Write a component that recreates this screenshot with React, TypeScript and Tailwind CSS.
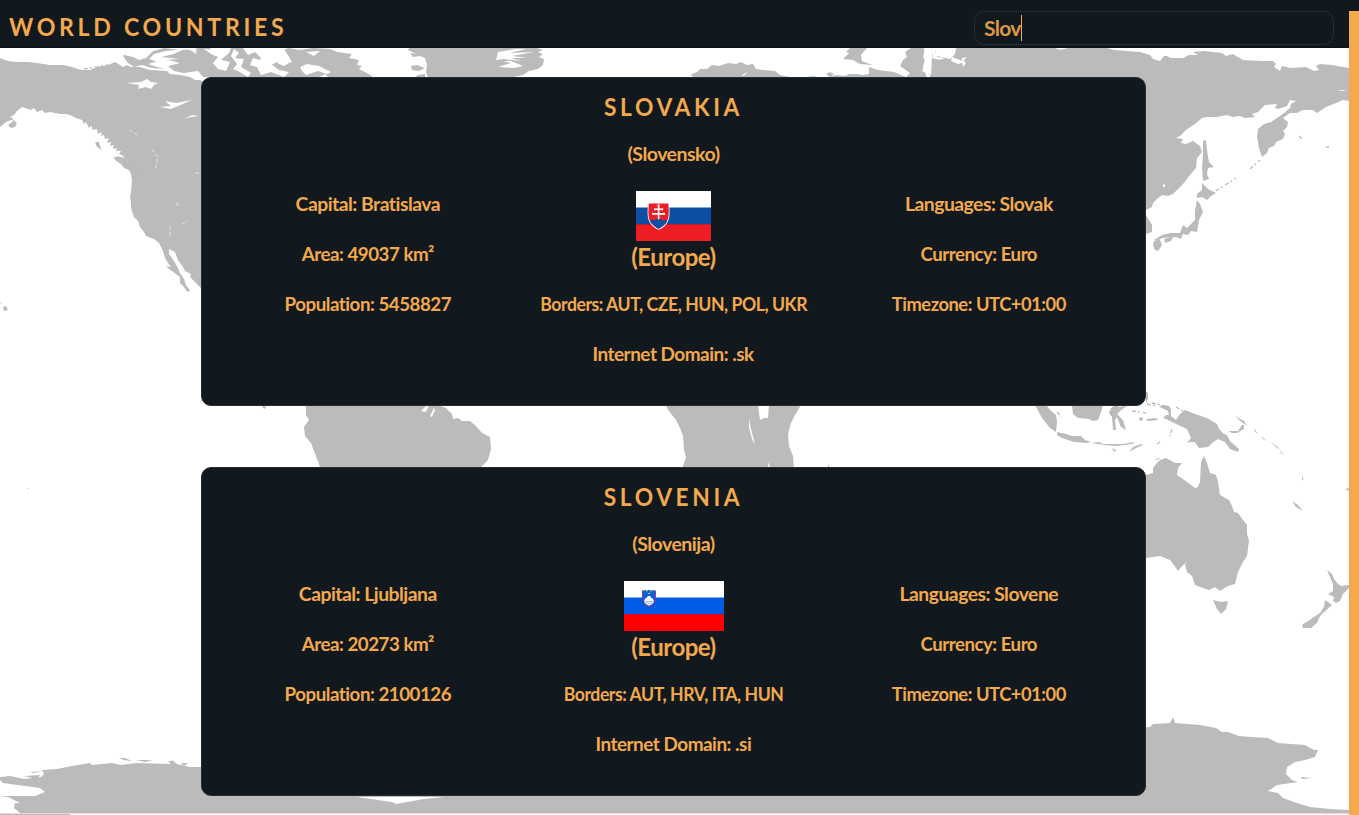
import React from "react";

type Country = {
  name: string;
  nativeName: string;
  flag: React.ReactNode;
  continent: string;
  left: string[];
  right: string[];
  borders: string;
  domain: string;
};

const SlovakFlag = () => (
  <svg width="75" height="50" viewBox="0 0 75 50" className="block">
    <path fill="#fff" d="M0 0h75v17H0z" />
    <path fill="#0b4ea2" d="M0 16.6h75v17H0z" />
    <path fill="#ee1c25" d="M0 33.3h75V50H0z" />
    <path fill="#fff" d="M12 11.7h21.2c.6 10 .8 15-1.5 19.2-2 4-6 6.500-9.100 7.900-3-1.400-7-3.900-9.100-7.900-2.300-4.200-2.100-9.200-1.500-19.200z" />
    <path fill="#ee1c25" d="M12.800 12.500h19.600c.6 9 .7 14-1.300 17.800-1.800 3.600-5.500 6.100-8.500 7.500-3-1.400-6.700-3.900-8.500-7.500-2-3.800-1.900-8.800-1.300-17.800z" />
    <path fill="#0b4ea2" d="M14.200 30.300c1-1.600 3-1.800 4.200-.9 1-2.200 6.500-2.400 8.400 0 1.600-.8 3.200-.4 4.200.9-1.800 3.600-5.400 6-8.400 7.500-3-1.500-6.600-3.900-8.400-7.500z" />
    <path fill="none" stroke="#fff" strokeWidth="1.6" d="M22.600 13.800v14.400M18.500 18.200h8.200M17 22.900h11.200M17 21.800v2.200M28.200 21.800v2.200M18.800 17.200v2M26.400 17.200v2M21.500 14.200h2.200" />
  </svg>
);

const SlovenianFlag = () => (
  <svg width="100" height="50" viewBox="0 0 100 50" className="ml-px block">
    <path fill="#fff" d="M0 0h100v17H0z" />
    <path fill="#005ce5" d="M0 16.600h100v17H0z" />
    <path fill="#f00" d="M0 33.300h100V50H0z" />
    <path fill="#005ce5" stroke="#a5285c" strokeWidth=".9" d="M18.500 9.800c0 7-.3 11.200 2.500 13.500 1.500 1.200 2.700 1.500 4 2.200 1.300-.7 2.500-1 4-2.200 2.800-2.300 2.500-6.500 2.500-13.500" />
    <path fill="#1560d0" d="M18.500 9.800c2-1 11-1 13 0v3h-13z" />
    <path fill="#fff" d="M20 20.500l1-3 1.500-.6.900-1.300 1.600-.8 1.600.8.9 1.300 1.500.6 1 3c-1 2.700-3 3.300-5 4.200-2-.9-4-1.500-5-4.200z" />
    <path stroke="#86afe9" strokeWidth=".9" d="M20.600 20.600h8.800M21 22.200h8" />
    <path fill="#ffe14a" d="M22 9.200h1.700v1H22zM26.300 9.200H28v1h-1.700zM24.200 12h1.700v1h-1.700z" />
  </svg>
);

const WorldMap = () => (
  <svg className="absolute inset-0 h-full w-full" viewBox="0 0 1349 815" preserveAspectRatio="none" aria-hidden="true">
    <g fill="#bbbbbb">
      {/* North America */}
      <path d="M0 58L5 60 8 61 17 62 28 62 37 63 50 65 63 65 72 67 78 69 83 70 90 70 97 67 108 65 115 62 120 65 123 67 127 65 131 67 140 67 150 70 167 71 170 74 180 75 190 77 195 80 199 80 210 83V296L201 288 196 283 190 277 191 274 185 271 183 267 178 260 175 252 171 250 169 249 169 254 172 258 177 266 180 273 184 279 186 285 189 289 190 291 188 292 186 290 184 287 180 283 180 277 176 274 169 269 166 266 171 267 168 263 165 258 163 251 159 243 154 239 146 236 144 232 140 227 138 221 134 217 131 208 131 203 130 197 131 192 132 180 131 174 129 170 124 168 121 164 115 160 114 157 120 157 125 158 122 155 119 154 121 151 116 151 117 148 113 149 114 145 110 146 111 142 107 143 109 138 105 139 104 135 101 136 102 132 98 134 97 129 93 130 92 125 89 128 86 122 84 124 82 120 76 118 70 115 66 114 60 114 50 112 45 113 42 110 37 112 34 108 31 110 22 107 17 111 14 115 10 117 14 119 6 122 0 127z" />
      <path d="M8 125l4-3 1-2 4 3-2 4-4 1zM95 142l4 0 1 4 2 4-5-3zM117 156l7 2 4 4 6 1 4 7-1 5-4-5-9-6-6-4zM103 128l4 9 2-3zM90 122l3 8 1-4z" />
      <path d="M0 302l2 1-1 1zM3 307l3-1 2 4-4 1zM28 488h1v1h-1z" />
      {/* Canadian Arctic islands */}
      <path d="M129 48L124 55 133 57 139 60 146 58 153 51 164 48 181 50 192 49 197 52 196 48 210 48 214 53 222 59 229 53 231 48 243 48 248 55 255 52 261 58 259 62 267 67 279 61 285 64 292 62 288 55 284 50 288 48 300 50 313 48 330 49 337 52 352 54 349 58 359 60 357 65 362 66 359 69 369 74 373 77H203L198 71 184 73 174 71 168 66 180 63 168 60 155 62 148 64 157 67 165 69 152 68 142 65 134 67 128 63 123 56z" />
      {/* Greenland */}
      <path d="M409 48H537L543 50 538 52 543 54 539 57 544 59 543 65 538 69 529 71 523 75 514 77 497 77H428L426 72 427 65 425 58 420 56 413 57 410 53 416 54 408 50z" />
      <path d="M411 66l6-1 8 3-6 3-7-1zM418 75l7-1v3h-10z" />
      {/* Europe */}
      <path d="M687 81L693 76 690 75 697 72 700 69 707 69 712 65 719 66 728 63 736 64 741 62 747 65 753 64 756 69 764 70 775 71 780 75 790 77 797 81zM820 81L827 77 836 75 845 76 849 74 858 74 862 75 869 74 869 67 878 70 894 72 906 77 910 73 900 66 903 60 907 57 905 52 911 48H925L923 57 926 62 922 71 931 75 932 71 944 76 941 83H820z" />
      {/* Northern Asia */}
      <path d="M932 55L936 51 937 56 950 59 955 54 956 48H1055L1060 50 1068 48H1107L1114 50 1140 52 1150 55 1153 59 1160 61 1164 56 1167 56 1171 58 1183 58 1189 55 1198 55 1193 52 1204 51 1222 53 1226 56 1233 54 1243 60 1262 61 1273 61 1276 64 1274 67 1280 71 1282 66 1290 68 1306 67 1314 71 1319 70 1316 66 1320 64 1332 65 1349 68V101L1343 100 1336 103 1326 107 1317 113 1313 110 1303 110 1297 113 1290 113 1283 118 1288 122 1287 127 1283 131 1285 134 1283 139 1276 142 1274 146 1269 148 1267 153 1262 157 1259 148 1257 137 1258 129 1264 124 1271 122 1277 118 1284 113 1290 108 1291 104 1296 101 1290 100 1287 106 1278 109 1275 108 1277 104 1265 105 1258 112 1252 114 1255 117 1245 118 1240 116 1233 117 1227 115 1217 117 1207 117 1202 118 1195 124 1186 130 1180 136 1176 138 1183 139 1181 143 1186 144 1193 141 1200 146 1202 152 1197 158 1196 168 1190 175 1183 184 1173 194 1168 196 1162 195 1157 199 1153 203 1152 207 1146 210H1120V100H930z" />
      <path d="M849 53l-3-1 4-4h17l-6 7 1 6 10 4-12-1-7-4-10-1zM826 74l4-2 4 2-4 3zM806 77l8-1 6 2-7 3z" />
      <path d="M1140 214l6 1 6 10 0 7-6 2zM1203 141l3-1 1 10 2 12 5 5-6 1-1 6 2 5-6 2-1-13 1-13zM1202 183l6 6 8 4-5 3-4 4-5-3-5 1 0-4 5-4zM1197 200l3 4 3 8-4 8-2 12-6-1-3 4-5-1-2 5-5-2-14 1-4 3-4-1 8-5 9-2 9 0 3-8 4 3 8-8 0-9zM1154 241l6-1 2 5-4 6-3-1-2-5zM1164 239l9-2-2 4-6 2z" />
      {/* South America */}
      <path d="M306 405h132l8 3 6 6 1 5 5-1 4 3 8 0 6 5 6 7 8 4 1 12-3 11-6 6-5 8-1 3H323l-4-13-8-21-6-7-1-9 5-7-3-5zM262 406h3l1 2-2 1z" />
      {/* Africa */}
      <path d="M666 405h92l2 15 4-2 4 0 1-13h32l-6 10-4 8-3 11 1 12 4 10 1 13H682l4-12-2-7-1-14-3-8-4-8-8-10zM805 472h1v3h-1zM828 464l2 4h-2z" />
      {/* South-east Asian islands */}
      <path d="M1035 405h11l5 6 5 4 1 7-1 10-6-4-8-10zM1072 405h31l-2 7-3 8-5 1-4-2-11-1-5-4zM1057 432l9 2 6 2 9 0 4 4 6 2-4 1-13-1-12-4-5-3zM1111 408l4-3 5 2 8-2-8 6-3 3 6 6 3 10-5-3-4-10-2 3 1 10-3 0-1-13-3-4zM1091 443l8-1 4 2 10 0 9 0 13-2-3 2-15 2-12-1zM1129 452l4-5 8-3 2 1-7 3zM1111 448l5 2-1 2zM1139 418l3-1 1 3-3 1zM1146 419l10-1 2 2-10 1zM1146 391l2 2 0 6-2 4zM1159 407l3-2 7 1 2 3 0 7 5 4 4-6 5-4 10 4 12 4 10 6 2 5 5 5 3 1 3 6 9 8-1 3-8-3-5-7-7-3-6 4-4 4-9 1-4-6-5 0-3 1 4-5-4-9-11-5-10-5-3-1 3-3 3 0-1-4-6-3zM1228 431l10 0 4-6 2 0 0 4-7 4-5 0zM1235 416l9 5 3 5-8-6zM1254 428l4 6-3-2zM1261 436l6 5-4-2zM1270 441l10 8-3-1zM1280 450l4 5-3-2zM1302 475l2 6-2-2zM1306 480l2 8zM1292 501l6 4 5 6-7-4zM1345 489l4-1v3z" />
      {/* Oceania */}
      <path d="M1140 479L1146 475 1153 473 1153 468 1156 464 1160 460 1166 458 1175 463 1182 463 1178 468 1177 475 1187 482 1195 488 1198 487 1200 482 1201 462 1204 456 1207 463 1210 473 1216 475 1218 482 1220 495 1229 500 1232 506 1234 512 1238 513 1243 520 1247 525 1247 534 1249 541 1247 556 1243 562 1238 572 1235 584 1228 586 1220 591 1215 587 1209 590 1203 588 1195 585 1192 576 1187 572 1185 565 1187 562 1182 566 1178 571 1174 565 1170 560 1160 556 1146 558zM1213 600l8 2 7-1-2 8-5 5-4-5zM1327 570l5 4 2 5 4 5 3 2 8-1v3l-6 6-3 7-4 2-3-2 1-4-6-3 5-3 0-7zM1325 600l3 2 4 3-8 7-4 4-3 7-6 5-8 0-1-3 9-6 9-6 4-6zM1155 459l6-1-4 2z" />
      {/* Antarctica */}
      <path d="M0 777L10 776 24 779 41 777 44 774 42 770 57 769 72 766 90 763 92 765 112 763 121 765 136 763 170 764 172 760 177 764 190 767 201 767H1140V728L1150 727 1153 724 1170 723 1173 717 1175 723 1200 725 1216 728 1222 732 1228 732 1239 736 1251 737 1268 738 1278 743 1305 745 1314 750 1318 750 1315 757 1305 760 1295 762 1287 767 1286 774 1292 780 1298 782 1277 785 1268 791 1278 793 1283 798 1297 803 1310 807 1330 809 1349 810V813H20L14 808 15 803 20 803 8 797 0 796 35 796 45 792 40 788 3 783 0 780z" />
      <path d="M119 758l6 0 7 3-8-1zM136 760l17 0-8 2zM168 761l5 0 3 4-5-1zM181 763l7 0-4 3zM30 772l12-1-8 2zM24 776l16-1-3 4zM1301 777l11 1-10 1z" />
      <path fill="#ddd" d="M0 813h1349v1H0z" />
      <path d="M0 814h70v1H0z" />
    </g>
    <g fill="#fff">
      <path d="M127 83l14-1 6-3 4 3 7 1-4 2-3 4-5-2-8 2 1-4zM160 107l11-1-6-5 11 2 16-3-14 6-7 3zM184 119l8-4 7 1-8 1zM176 202l3 4-2-1zM154 54l12-3 10-1 8-1-10 5-13 3 18 2-14 1 6 4-14-2-8-3zM187 49l7 0 3 6-5-4zM204 49l14 1 4 10 8 2-4 9-8-2-5-6 5-6-7-3zM234 49l5 4-4 5 9 1-3 8 10 6-3 4-10-6-5-2 4-5-6-8zM253 58l7 2 13-4-3 7 9 7 10 2-5 5-13-5-10 3-4-8-7-2zM284 49l3 5-4 6 6 3-5 3-7-3 4-6zM306 52l14-1-6 5zM300 67l7-3 12 2 12 6-4 2-9-3-12 4-4-4zM498 52l18-3 10 0-16 4 24-1-22 4 15 2-17 0 12 3-18-2-8 1zM498 67l13-4-8-2 8 0 12 5-9 2zM320 77l5-3 3 3z" />
      <path d="M924 48l4 0-1 11 3 8-1 7 3 7-4 0-2-6-3-8 2-8zM934 51l4 3-1 3 8 1-5 2-8-2zM952 57l14 5-8 2-7-3zM962 58l5-1-4 4 3 2-3 4zM1163 184l2 1 0 2-2 0zM1337 91l5-1 5 1-5 0zM742 75l5-3-1 2-3 2zM749 419l2 10 4 16-3-6-3-12zM768 462l2 5 0 14h-1zM357 797l35 5 4 2 28-5 20-2zM421 411l6-6 2 0-3 7zM430 416l4-8 1 2-3 7z" />
    </g>
    <path fill="none" stroke="#bbb" strokeWidth="1.3" strokeDasharray="4 2 2 3" d="M1250 169l10-9M1216 191l20-13M1152 403l14 3M1132 411l14 2M1172 429l-2 7M1160 442l-3 2M1057 412l4 5M1299 136l3 3M1326 147h3M1176 407l10 6M1147 404l10 2M84 69l24-4" />
    <path fill="none" stroke="#fff" strokeWidth=".6" strokeDasharray="4 2" d="M152 149l6 8-3 13M129 130l9 5M170 226v10M182 224l6-4M195 173h6" />
  </svg>
);

const countries: Country[] = [
  {
    name: "SLOVAKIA",
    nativeName: "(Slovensko)",
    flag: <SlovakFlag />,
    continent: "(Europe)",
    left: ["Capital: Bratislava", "Area: 49037 km²", "Population: 5458827"],
    right: ["Languages: Slovak", "Currency: Euro", "Timezone: UTC+01:00"],
    borders: "Borders: AUT, CZE, HUN, POL, UKR",
    domain: "Internet Domain: .sk",
  },
  {
    name: "SLOVENIA",
    nativeName: "(Slovenija)",
    flag: <SlovenianFlag />,
    continent: "(Europe)",
    left: ["Capital: Ljubljana", "Area: 20273 km²", "Population: 2100126"],
    right: ["Languages: Slovene", "Currency: Euro", "Timezone: UTC+01:00"],
    borders: "Borders: AUT, HRV, ITA, HUN",
    domain: "Internet Domain: .si",
  },
];

const widths: Record<string, string> = {
  Area: "scale-x-[0.96]",
  Population: "scale-x-[0.96]",
  Currency: "scale-x-[0.955]",
  Timezone: "scale-x-[0.94]",
  Borders: "scale-x-[0.903]",
  "Internet Domain": "scale-x-[0.97]",
};

const Line = ({ children }: { children: string }) => (
  <p className={`h-[50px] whitespace-nowrap text-center text-[19.5px] leading-[26px] tracking-[-0.5px] ${widths[children.split(":")[0]] ?? "scale-x-[0.99]"}`}>
    {children}
  </p>
);

const CountryCard = ({ country }: { country: Country }) => (
  <article className="h-[329px] w-[945px] shrink-0 rounded-[10px] border border-[#262d35] bg-[#11191f] px-[13px]">
    <h2 className="mt-[13px] scale-x-[0.91] text-center text-[25px] leading-[30px] tracking-[4px]">{country.name}</h2>
    <p className="mt-5 text-center text-[19.5px] leading-[26px] tracking-[-0.5px]">{country.nativeName}</p>
    <div className="mt-6 grid grid-cols-3">
      <div>{country.left.map((t) => <Line key={t}>{t}</Line>)}</div>
      <div className="flex flex-col items-center">
        {country.flag}
        <p className="mb-[18px] h-8 text-center text-[24px] leading-8 tracking-[-0.5px]">{country.continent}</p>
        <Line>{country.borders}</Line>
        <Line>{country.domain}</Line>
      </div>
      <div>{country.right.map((t) => <Line key={t}>{t}</Line>)}</div>
    </div>
  </article>
);

export default function App() {
  return (
    <div className="flex h-[815px] w-full overflow-hidden bg-[#11191f] font-['Lato','Open_Sans',sans-serif] font-bold text-[#f3a94c]">
      <div className="flex min-w-0 flex-1 flex-col">
        <header className="flex h-12 shrink-0 items-start justify-between border-b border-[#0b0f1a] pl-[9px] pr-[15px]">
          <h1 className="mt-[11px] origin-left scale-x-[0.925] text-[25px] leading-[30px] tracking-[4px]">WORLD COUNTRIES</h1>
          <div className="mt-[11px] flex h-[34px] w-[360px] items-center rounded-[10px] border border-[#262d35] pl-[9px]">
            <span className="text-[21px] leading-[26px] tracking-[-0.7px] text-[#d99845]">Slov</span>
            <span className="h-[26px] w-px bg-[#f3a94c]" />
          </div>
        </header>
        <main className="relative flex-1 bg-white">
          <div className="absolute -top-12 left-0 h-[815px] w-full [clip-path:inset(48px_0_0_0)]">
            <WorldMap />
          </div>
          <div className="relative flex flex-col items-center gap-[61px] pr-[2px] pt-[29px]">
            {countries.map((c) => <CountryCard key={c.name} country={c} />)}
          </div>
        </main>
      </div>
      <div className="mt-[11px] w-[10px] shrink-0 bg-[#f3a94c]" />
    </div>
  );
}
